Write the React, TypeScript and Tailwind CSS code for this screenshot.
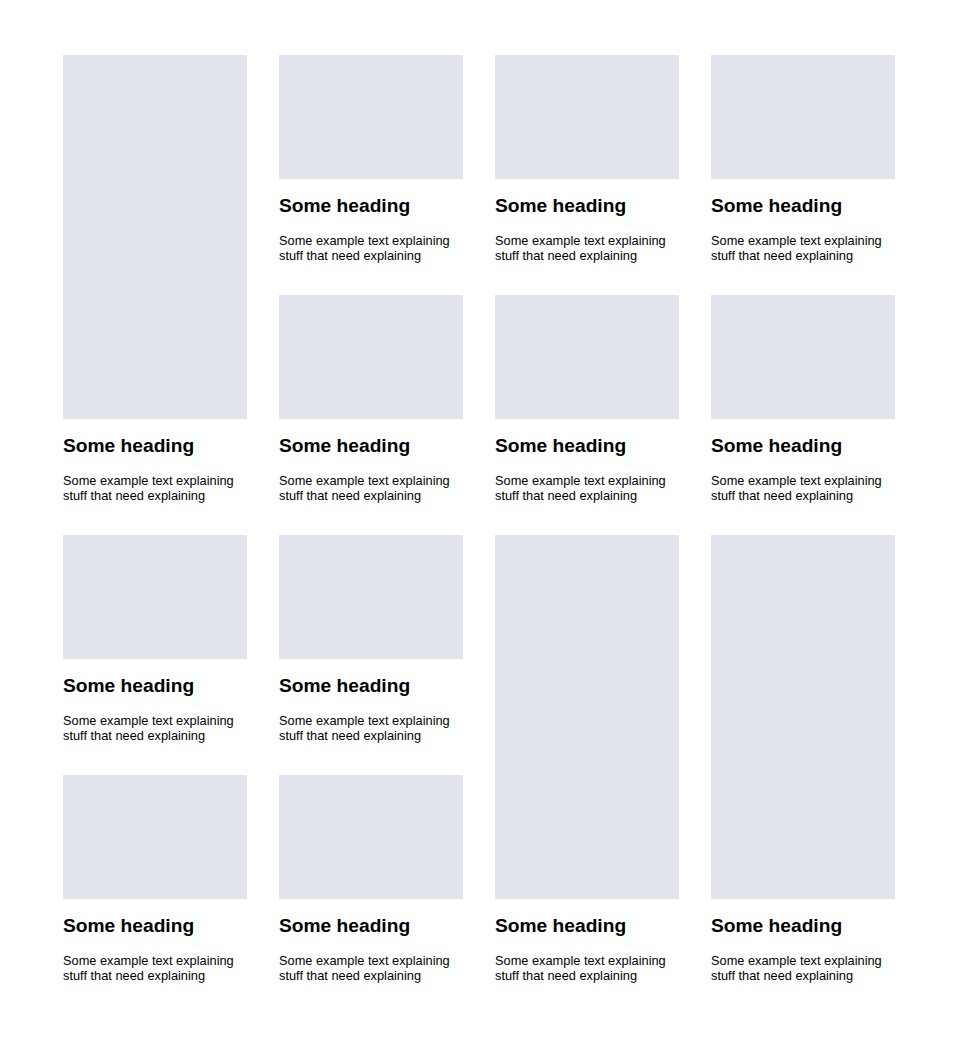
import React from "react";

type Card = { tall?: boolean };

const cards: Card[] = [
  { tall: true },
  {}, {}, {},
  {}, {}, {},
  {}, {}, { tall: true }, { tall: true },
  {}, {},
];

export default function App() {
  return (
    <div
      className="min-h-[1037px] bg-white pl-[63px] pt-[55px] text-black"
      style={{ fontFamily: '"Liberation Sans", Arial, sans-serif' }}
    >
      <div className="grid w-[832px] grid-cols-[repeat(4,184px)] auto-rows-[208px] gap-[32px]">
        {cards.map((c, i) => (
          <div key={i} className={`flex flex-col ${c.tall ? "row-span-2" : ""}`}>
            <div className="flex-1 bg-[#e1e4ec]" />
            <h3 className="mt-[16px] text-[19.2px] font-bold leading-[22px]">Some heading</h3>
            <p className="mt-[16px] text-[12.8px] leading-[15px]">
              Some example text explaining
              <br />
              stuff that need explaining
            </p>
          </div>
        ))}
      </div>
    </div>
  );
}
